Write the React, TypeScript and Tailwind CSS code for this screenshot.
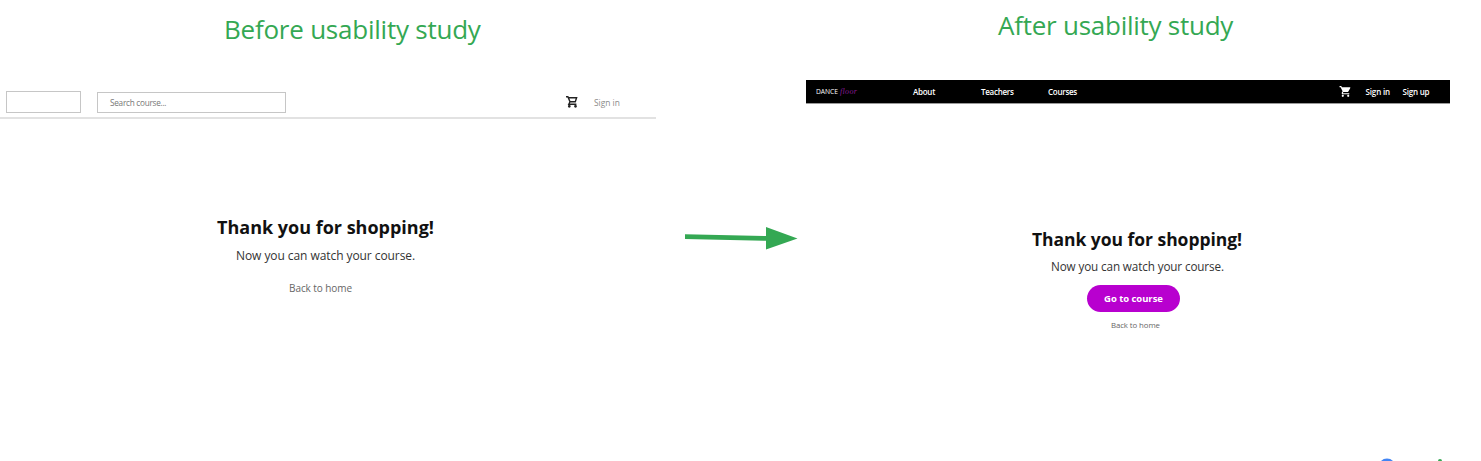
import React from "react";
import { MdShoppingCart } from "react-icons/md";

function OutlineCart() {
  return (
    <svg className="ml-[280px] mt-[5px]" width="12" height="13" viewBox="0 0 12 13" fill="none" stroke="#222" strokeWidth="1.4">
      <path d="M0 1.700h1.900L4 6.700h5.300l1.300-4H2.500M4 6.700 2.800 9.200h7.600" />
      <circle cx="3.300" cy="11.300" r=".7" fill="#222" />
      <circle cx="9.500" cy="11.300" r=".7" fill="#222" />
    </svg>
  );
}

function BeforeScreen() {
  return (
    <section className="flex h-[461px] w-[656px] shrink-0 flex-col pt-[11px]">
      <h1 className="ml-[224px] h-9 text-[26px] leading-9 tracking-[-0.23px] text-[#34a853]">Before usability study</h1>
      <header className="mt-[43px] flex h-[29px] items-start border-b-2 border-[#e2e2e2] pl-[6px]">
        <div className="mt-px h-[22px] w-[75px] border border-[#c6c6c6]" />
        <div className="ml-4 mt-[2px] h-[21px] w-[189px] border border-[#c6c6c6] pl-[12px] text-[8.2px] leading-[20px] tracking-[-0.25px] text-[#777]">
          Search course...
        </div>
        <OutlineCart />
        <span className="ml-4 mt-[6px] text-[8.4px] leading-[14px] text-[#8a8a8a]">Sign in</span>
      </header>
      <main className="flex flex-col items-start pt-[96px]">
        <h2 className="ml-[217px] text-[18px] font-bold leading-6 text-[#111]">Thank you for shopping!</h2>
        <p className="ml-[236px] mt-[7px] text-[12px] leading-5 tracking-[-0.07px] text-[#333]">Now you can watch your course.</p>
        <a className="ml-[289px] mt-[14px] text-[10px] leading-4 tracking-[-0.07px] text-[#666]">Back to home</a>
      </main>
    </section>
  );
}

function AfterScreen() {
  return (
    <section className="flex h-[461px] w-[644px] shrink-0 flex-col pt-[7px]">
      <h1 className="ml-[192px] h-9 text-[26px] leading-9 tracking-[-0.25px] text-[#34a853]">After usability study</h1>
      <header className="mt-[37px] flex h-6 items-center border-b border-[#9a9a9a] bg-black text-[8px] leading-[23px] text-white">
        <div className="flex w-[107px] gap-[2px] pl-[10px] text-[6.7px]">
          <span>DANCE</span>
          <span className="font-['Liberation_Serif',serif] text-[8px] italic tracking-[0.3px] text-[#8b1a98]">floor</span>
        </div>
        <nav className="flex font-semibold tracking-[-0.27px]">
          <a className="w-[68px]">About</a>
          <a className="w-[67px]">Teachers</a>
          <a className="w-[96px]">Courses</a>
        </nav>
        <MdShoppingCart className="ml-[195px]" size={13} />
        <a className="ml-[13.500px] w-[37px] font-semibold tracking-[-0.14px]">Sign in</a>
        <a className="font-semibold tracking-[-0.2px]">Sign up</a>
      </header>
      <main className="flex flex-col items-start pt-[123px]">
        <h2 className="ml-[226px] text-[17.5px] font-bold leading-6 tracking-[-0.04px] text-[#111]">Thank you for shopping!</h2>
        <p className="ml-[245px] mt-[5px] text-[11.7px] leading-5 tracking-[-0.12px] text-[#333]">Now you can watch your course.</p>
        <button className="ml-[281px] mt-[9px] h-[27px] w-[93px] rounded-full bg-[#b800cf] text-[9.5px] font-bold leading-[27px] tracking-[-0.05px] text-white">
          Go to course
        </button>
        <a className="ml-[305px] mt-[6px] text-[7.8px] leading-[14px] tracking-[-0.08px] text-[#666]">Back to home</a>
      </main>
    </section>
  );
}

export default function App() {
  return (
    <div className="relative flex h-[461px] w-[1481px] overflow-hidden whitespace-nowrap bg-white font-['Open_Sans',sans-serif]">
      <BeforeScreen />
      <div className="w-[150px] shrink-0 pl-[29px] pt-[226px]">
        <svg width="113" height="25" viewBox="0 0 113 25" fill="#34a853">
          <path d="M0 8.200 81 10V.9L112.500 12.600 81 23.600V14.800L0 13Z" />
        </svg>
      </div>
      <AfterScreen />
      <svg className="absolute bottom-0 left-[1379px]" width="65" height="3" viewBox="0 0 65 3">
        <circle cx="8" cy="9" r="8.500" fill="#4285f4" />
        <circle cx="61" cy="3" r="2" fill="#34a853" />
      </svg>
    </div>
  );
}
